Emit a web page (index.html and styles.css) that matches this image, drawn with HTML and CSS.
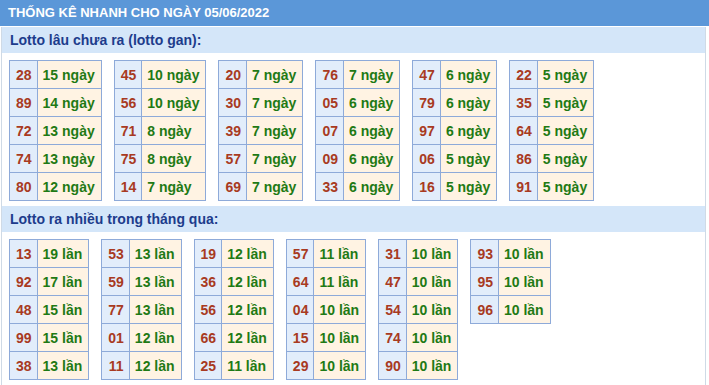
FILE: index.html
```html
<!DOCTYPE html>
<html>
<head>
<meta charset="utf-8">
<link rel="stylesheet" href="styles.css">
</head>
<body>
<div class="title">THỐNG KÊ NHANH CHO NGÀY 05/06/2022</div>
<div class="content">
  <div class="band">Lotto lâu chưa ra (lotto gan):</div>
  <div class="tables">
    <table class="t"><tr><td class="n">28</td><td class="d">15 ngày</td></tr><tr><td class="n">89</td><td class="d">14 ngày</td></tr><tr><td class="n">72</td><td class="d">13 ngày</td></tr><tr><td class="n">74</td><td class="d">13 ngày</td></tr><tr><td class="n">80</td><td class="d">12 ngày</td></tr></table>
    <table class="t"><tr><td class="n">45</td><td class="d">10 ngày</td></tr><tr><td class="n">56</td><td class="d">10 ngày</td></tr><tr><td class="n">71</td><td class="d">8 ngày</td></tr><tr><td class="n">75</td><td class="d">8 ngày</td></tr><tr><td class="n">14</td><td class="d">7 ngày</td></tr></table>
    <table class="t"><tr><td class="n">20</td><td class="d">7 ngày</td></tr><tr><td class="n">30</td><td class="d">7 ngày</td></tr><tr><td class="n">39</td><td class="d">7 ngày</td></tr><tr><td class="n">57</td><td class="d">7 ngày</td></tr><tr><td class="n">69</td><td class="d">7 ngày</td></tr></table>
    <table class="t"><tr><td class="n">76</td><td class="d">7 ngày</td></tr><tr><td class="n">05</td><td class="d">6 ngày</td></tr><tr><td class="n">07</td><td class="d">6 ngày</td></tr><tr><td class="n">09</td><td class="d">6 ngày</td></tr><tr><td class="n">33</td><td class="d">6 ngày</td></tr></table>
    <table class="t"><tr><td class="n">47</td><td class="d">6 ngày</td></tr><tr><td class="n">79</td><td class="d">6 ngày</td></tr><tr><td class="n">97</td><td class="d">6 ngày</td></tr><tr><td class="n">06</td><td class="d">5 ngày</td></tr><tr><td class="n">16</td><td class="d">5 ngày</td></tr></table>
    <table class="t"><tr><td class="n">22</td><td class="d">5 ngày</td></tr><tr><td class="n">35</td><td class="d">5 ngày</td></tr><tr><td class="n">64</td><td class="d">5 ngày</td></tr><tr><td class="n">86</td><td class="d">5 ngày</td></tr><tr><td class="n">91</td><td class="d">5 ngày</td></tr></table>
  </div>
  <div class="band">Lotto ra nhiều trong tháng qua:</div>
  <div class="tables">
    <table class="t"><tr><td class="n">13</td><td class="d">19 lần</td></tr><tr><td class="n">92</td><td class="d">17 lần</td></tr><tr><td class="n">48</td><td class="d">15 lần</td></tr><tr><td class="n">99</td><td class="d">15 lần</td></tr><tr><td class="n">38</td><td class="d">13 lần</td></tr></table>
    <table class="t"><tr><td class="n">53</td><td class="d">13 lần</td></tr><tr><td class="n">59</td><td class="d">13 lần</td></tr><tr><td class="n">77</td><td class="d">13 lần</td></tr><tr><td class="n">01</td><td class="d">12 lần</td></tr><tr><td class="n">11</td><td class="d">12 lần</td></tr></table>
    <table class="t"><tr><td class="n">19</td><td class="d">12 lần</td></tr><tr><td class="n">36</td><td class="d">12 lần</td></tr><tr><td class="n">56</td><td class="d">12 lần</td></tr><tr><td class="n">66</td><td class="d">12 lần</td></tr><tr><td class="n">25</td><td class="d">11 lần</td></tr></table>
    <table class="t"><tr><td class="n">57</td><td class="d">11 lần</td></tr><tr><td class="n">64</td><td class="d">11 lần</td></tr><tr><td class="n">04</td><td class="d">10 lần</td></tr><tr><td class="n">15</td><td class="d">10 lần</td></tr><tr><td class="n">29</td><td class="d">10 lần</td></tr></table>
    <table class="t"><tr><td class="n">31</td><td class="d">10 lần</td></tr><tr><td class="n">47</td><td class="d">10 lần</td></tr><tr><td class="n">54</td><td class="d">10 lần</td></tr><tr><td class="n">74</td><td class="d">10 lần</td></tr><tr><td class="n">90</td><td class="d">10 lần</td></tr></table>
    <table class="t"><tr><td class="n">93</td><td class="d">10 lần</td></tr><tr><td class="n">95</td><td class="d">10 lần</td></tr><tr><td class="n">96</td><td class="d">10 lần</td></tr></table>
  </div>
</div>
</body>
</html>
```
FILE: styles.css
```css
html, body {
  margin: 0;
  padding: 0;
  background: #ffffff;
  font-family: "Liberation Sans", Arial, sans-serif;
}
.title {
  height: 26px;
  line-height: 26px;
  padding-left: 8px;
  background: #5b97d8;
  color: #ffffff;
  font-size: 13px;
  font-weight: bold;
}
.content {
  margin-top: 1px;
  margin-left: 1px;
  width: 703px;
  border-left: 1px solid #cfdae6;
  border-right: 1px solid #cfdae6;
  padding-bottom: 3px;
}
.band {
  height: 26px;
  line-height: 26px;
  padding-left: 8px;
  background: #d4e6f9;
  color: #1d3c8c;
  font-size: 14px;
  font-weight: bold;
}
.tables {
  display: flex;
  align-items: flex-start;
  gap: 12px;
  padding: 7px 0 5px 7px;
}
.t {
  border-collapse: collapse;
  font-size: 14px;
  font-weight: bold;
}
.t td {
  border: 1px solid #8eaad9;
  height: 27px;
  line-height: 16px;
  white-space: nowrap;
}
.t td.n {
  background: #e2edfb;
  color: #a83a22;
  text-align: center;
  padding: 0 5px 0 6px;
}
.t td.d {
  background: #fff3e3;
  color: #1f7a15;
  padding: 0 6px 0 5px;
}
```
